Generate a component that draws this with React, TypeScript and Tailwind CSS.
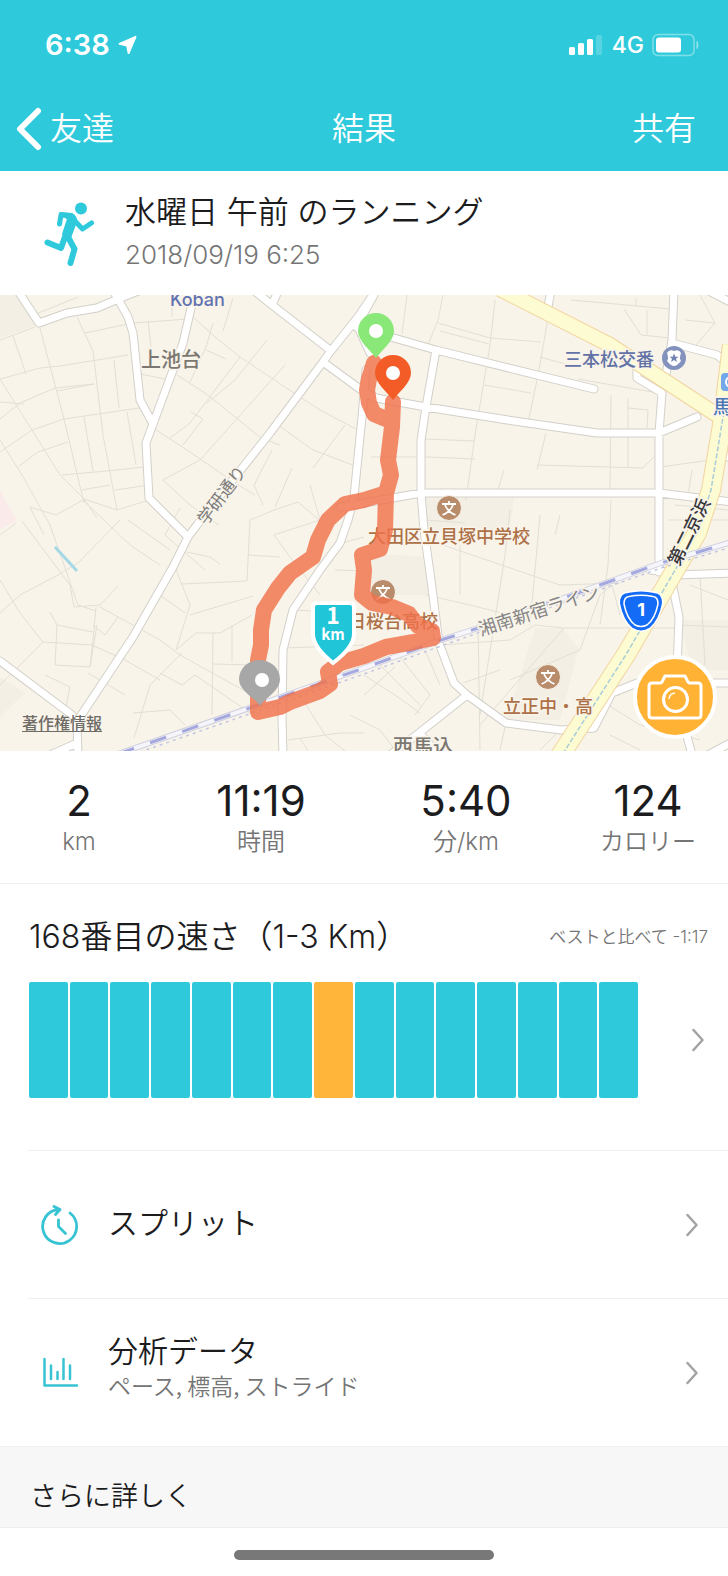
import { ReactNode } from 'react';

const jp = "font-[Inter,'Noto_Sans_CJK_JP',sans-serif]";

const stats = [
  { value: '2', label: 'km' },
  { value: '11:19', label: '時間' },
  { value: '5:40', label: '分/km' },
  { value: '124', label: 'カロリー' },
];

const bars = Array.from({ length: 15 }, (_, index) => index === 7);

// Small streets, drawn as hairlines
const streets = [
  'M36 19 L78 2 M0 45 L35 32 M40 33 L64 124 L84 208 M0 84 L40 73 L60 71 L128 60 M0 107 L24 109 M0 124 L20 108 L55 93 L94 89',
  'M13 41 L26 79 M77 22 L93 56 L103 140 L117 215 M85 38 L133 28 L188 24 M148 26 L151 52 M0 84 L60 180 L84 204 L97 223',
  'M64 124 L139 113 M114 65 L119 113 M84 122 L93 176 M127 117 L136 170 M57 96 L94 89 M140 79 L165 84 M19 171 L38 157 L68 147',
  'M0 157 L32 135 L64 124 M0 145 L22 180 L50 230 L78 310 L96 316 M62 180 L117 175 L152 171 M82 195 L110 190 M115 195 L149 190',
  'M84 204 L117 215 L146 206 M83 205 L56 220 L30 212 M83 205 L130 250 L160 270 M30 212 L44 240 M16 228 L0 240',
  'M193 22 L215 42 L240 62 L297 100 L320 115 L358 135 M177 80 L208 100 L261 143 L280 150 M153 133 L190 157 L235 188 L255 200',
  'M267 45 L235 85 L207 108 M240 62 L190 128 L170 143 M285 70 L200 165 L163 185 L190 210 L219 230 M213 28 L206 52 L190 87',
  'M206 55 L226 64 M233 3 L223 36 M172 2 L172 22 M191 117 L203 124 L183 150 M278 130 L313 155 L358 172 M345 130 L313 173',
  'M272 155 L254 190 L263 210 M292 173 L275 212 M310 190 L320 225 M250 225 L274 215 L298 207 L325 230 M180 213 L165 240 L205 275',
  'M128 225 L170 255 M22 226 L70 290 L74 312 L100 310 L118 291 M0 318 L20 300 L58 280 L78 268 L120 225 M0 285 L20 318 L43 347 L92 350',
  'M43 347 L0 390 M50 317 L57 330 L55 370 L90 372 L93 345 L96 312 M57 330 L93 337 M100 312 L160 345 L180 360 L270 410',
  'M92 350 L125 365 L160 385 M88 378 L125 400 M90 372 L97 330 M45 380 L70 392 L66 412 M118 322 L105 340 L93 330',
  'M175 272 L190 310 L176 355 M182 289 L247 286 L250 225 M190 320 L253 301 M160 300 L185 318 M176 355 L196 338 L220 338 L252 320 M213 338 L212 420',
  'M232 330 L232 367 M213 369 L255 370 M160 378 L182 390 L195 380 L250 418 M182 358 L150 390 L134 443 M133 418 L170 415 L185 430',
  'M187 257 L210 262 L220 269 M248 260 L280 262 M274 240 L290 262 L320 300 M274 240 L320 225 M335 250 L364 242 M335 275 L364 276',
  'M285 353 L364 350 M290 315 L364 318 M303 405 L325 440 L345 456 M288 445 L340 438 L364 438 M300 443 L308 456',
  'M407 0 L402 39 M443 0 L438 25 L426 55 M495 5 L490 50 L475 140 M438 28 L490 43 L541 47 M440 36 L489 49 M549 18 L538 80 L527 133',
  'M484 90 L531 98 M475 140 L466 205 M540 62 L580 73 M578 84 L658 98 M611 100 L610 198 M628 103 L628 172 M628 113 L648 115 L647 133',
  'M537 175 L546 138 M504 175 L497 198 M426 162 L475 164 M424 144 L475 146 M371 162 L426 162 M537 170 L643 173 L658 158',
  'M571 5 L605 8 L670 14 M624 14 L641 40 L670 43 M636 3 L636 12 M647 15 L647 40 M700 0 L715 28 L696 50 M685 25 L715 28 M660 172 L711 165 M692 175 L688 200',
  'M426 300 L470 310 L530 325 M510 215 L505 260 L480 420 M540 220 L530 330 M611 205 L608 270 L600 330 M426 225 L465 228 M437 248 L560 290 L620 288',
  'M460 250 L460 300 M560 220 L555 240 M564 333 L678 333 M564 333 L480 430 M478 325 L480 455 M441 350 L510 345 L535 330 L564 333',
  'M364 380 L395 400 L420 418 M380 370 L420 410 M400 362 L430 400 L415 420 M425 355 L440 390 M364 400 L395 372 M463 388 L500 375',
  'M510 385 L580 355 L600 300 L612 290 L620 320 M690 290 L728 305 M680 330 L728 332 M700 280 L705 370 M600 405 L640 430 L700 445 M350 420 L380 435 L395 455',
  'M668 225 L728 225 M675 210 L728 215 M560 435 L540 455 M506 428 L500 455 M580 405 L620 400 M610 440 L640 455',
];

const roads = [
  'M18 -4 L39 28 L67 18 L97 13 L118 4 L138 -4',
  'M112 -6 L118 4 L128 22 L133 38 L140 105 L153 129',
  'M194 0 L183 48 L173 75 L153 129 L146 148 L149 203 L188 242',
  'M377 -6 L358 22 L330 57 L323 67 L270 138 L197 230 L188 242 L173 272 L133 342 L80 422 L77 430 L78 460',
  'M252 -6 L272 10 L330 55 M279 -6 L272 10',
  'M323 67 L364 97 L376 103 L426 112 L514 126 L597 138 L659 138 L697 122',
  'M358 32 L370 58 M374 0 L356 32 M366 75 L362 122 L354 202 L348 225 L340 248 L320 275 L293 315 L283 355 L282 425 L283 460',
  'M365 35 L394 43 L436 55 L594 94',
  'M436 55 L426 112 L421 145 L421 198 L424 235 L431 285 L439 348 L454 388 L467 400 L506 428 L561 435 L594 433 L612 398 L637 388 L732 388',
  'M467 400 L419 438 L390 460 M419 438 L440 460',
  'M340 212 L364 208 L421 198 L659 198 L732 207',
  'M674 -5 L672 45 L666 80 M637 72 L637 83 L662 98 L659 138 L659 277',
  'M672 48 L717 60 L732 72 M551 -5 L548 12 M705 -6 L732 8',
  'M674 280 L732 278 M672 288 L679 322 L677 375 M684 430 L692 460 M708 460 L732 447 M722 162 L732 162 M650 275 L668 277',
  'M0 366 L72 420 M50 460 L77 448',
];

const mainRoads = [
  { d: 'M500 -6 L610 50 L717 120', width: 14 },
  { d: 'M732 50 L722 130 L711 195 L697 238 L671 282 L627 358 L558 464', width: 18 },
];

const railway = 'M118 459 L364 373 L441 345 L500 326 L661 268 L732 247';

const Chevron = () => (
  <svg className="h-6 w-3 shrink-0" viewBox="0 0 12 24" fill="none" stroke="#a3a3a3" strokeWidth="2.500" strokeLinecap="round" strokeLinejoin="round">
    <path d="M1.500 2 L10.500 12 L1.500 22" />
  </svg>
);

const Pin = ({ x, y, color }: { x: number; y: number; color: string }) => (
  <g transform={`translate(${x} ${y})`}>
    <path d="M0 0 C-6 -8 -18 -17 -18 -27 A18 18 0 0 1 18 -27 C18 -17 6 -8 0 0 Z" fill={color} />
    <circle cx="0" cy="-27" r="7" fill="#fff" />
  </g>
);

const School = ({ x, y }: { x: number; y: number }) => (
  <g transform={`translate(${x} ${y})`}>
    <circle r="12.500" fill="#b98c6c" stroke="#f9f4ea" strokeWidth="1" />
    <path d="M-7 -4 H7 M0 -7 V-4 M-4 -3 Q-1 4 6.500 7 M4 -3 Q1 4 -6.500 7" stroke="#fff" strokeWidth="1.800" fill="none" />
  </g>
);

const StatusBar = () => (
  <div className="flex h-[86px] items-center justify-between pt-1 pr-7 pl-[45px]">
    <div className="flex items-center gap-2">
      <span className="text-[29px] leading-8 font-semibold">6:38</span>
      <svg className="h-5 w-5" viewBox="0 0 20 20" fill="#fff" stroke="#fff" strokeWidth="2" strokeLinejoin="round">
        <path d="M17.500 1.800 L1.500 8.800 L9.200 10.600 L10.600 18 Z" />
      </svg>
    </div>
    <div className="flex items-center gap-2">
      <svg className="h-6 w-9" viewBox="0 0 36 24" fill="#fff">
        <rect x="1" y="14" width="6" height="8" rx="1.500" />
        <rect x="10" y="10" width="6" height="12" rx="1.500" />
        <rect x="19" y="6" width="6" height="16" rx="1.500" />
        <rect x="28" y="2" width="6" height="20" rx="1.500" opacity=".2" />
      </svg>
      <span className="text-[23px] leading-8 font-medium">4G</span>
      <svg className="h-6 w-12" viewBox="0 0 48 24" fill="none">
        <rect x="1" y="1.500" width="41" height="21" rx="5" stroke="#fff" strokeOpacity=".4" strokeWidth="1.500" />
        <rect x="4" y="4.500" width="25" height="15" rx="3" fill="#fff" />
        <path d="M45 8.500 Q47 12 45 15.500 Z" fill="#fff" stroke="#fff" opacity=".5" />
      </svg>
    </div>
  </div>
);

const RouteMap = () => (
  <section className="relative overflow-hidden">
    <svg className={`block h-auto w-full ${jp}`} viewBox="0 0 728 456" role="img" aria-label="ルート">
      <rect width="728" height="456" fill="#f9f4ea" />
      <path d="M0 0 H20 L37 30 L0 43 Z M0 382 L25 398 L0 422 Z M424 203 L514 203 L508 250 L428 235 Z M368 258 L427 262 L431 300 L370 300 Z M535 333 L562 333 L579 353 L560 425 L506 425 Z M680 325 H728 V375 H692 Z" fill="#f4efe4" />
      <path d="M0 195 L16 225 L0 235 Z" fill="#fbeaea" />
      <path d={streets.join(' ')} stroke="#e3dfd6" strokeWidth="1" fill="none" />
      <path d="M55 252 L77 276" stroke="#a5d8e6" strokeWidth="3" />

      <path d={roads.join(' ')} stroke="#d3d0ca" strokeWidth="9" fill="none" strokeLinejoin="round" strokeLinecap="round" />
      <path d={roads.join(' ')} stroke="#fff" strokeWidth="7" fill="none" strokeLinejoin="round" strokeLinecap="round" />
      {mainRoads.map((road) => (
        <path key={road.d} d={road.d} stroke="#f2d5a0" strokeWidth={road.width + 2} fill="none" strokeLinejoin="round" />
      ))}
      {mainRoads.map((road) => (
        <path key={road.d} d={road.d} stroke="#fdfbd2" strokeWidth={road.width} fill="none" strokeLinejoin="round" />
      ))}
      <path d="M725 110 L711 195 L697 238 L671 282 L627 358 L562 460" stroke="#a9cdd8" strokeWidth="1.500" strokeDasharray="5 2" fill="none" />

      <path d={railway} stroke="#cfd0de" strokeWidth="6" fill="none" />
      <path d={railway} stroke="#f5f5fb" strokeWidth="4" fill="none" />
      <path d={railway} stroke="#a4a8dc" strokeWidth="3" strokeDasharray="17 17" fill="none" />
      <path d="M120 464 L364 379 L441 351 L661 273 L732 252" stroke="#c3c6e2" strokeWidth="1.500" strokeDasharray="3 4" fill="none" />

      <g fill="#ad7047" stroke="#f9f4ea" strokeWidth="3" paintOrder="stroke" fontSize="18" fontWeight="500">
        <text x="368" y="248">大田区立貝塚中学校</text>
        <text x="348" y="333">日桜台高校</text>
        <text x="503" y="418">立正中・高</text>
      </g>
      <School x={449} y={213} />
      <School x={383} y={297} />
      <School x={548} y={382} />

      <g stroke="#f9f4ea" strokeWidth="3" paintOrder="stroke">
        <text x="170" y="11" fontSize="18" fontWeight="500" fill="#6272b0">Koban</text>
        <text x="141" y="72" fontSize="20" fontWeight="500" fill="#7b7771">上池台</text>
        <text x="564" y="71" fontSize="18" fontWeight="500" fill="#6272a6">三本松交番</text>
        <text x="713" y="119" fontSize="19" fontWeight="500" fill="#4d76b5">馬</text>
        <text x="393" y="459" fontSize="20" fontWeight="500" fill="#7b7771">西馬込</text>
        <text transform="translate(206 231) rotate(-53)" fontSize="17" fontWeight="400" fill="#7b7b7b">学研通り</text>
        <text transform="translate(481 341) rotate(-18)" fontSize="18" fontWeight="400" fill="#858585">湘南新宿ライン</text>
        <text transform="translate(679 272) rotate(-64)" fontSize="18" fontWeight="500" fill="#38383c">第二京浜</text>
      </g>
      <g transform="translate(674 63)">
        <circle r="12" fill="#8391bd" />
        <path d="M-7 -5 Q-5 -9 0 -7 Q5 -9 7 -5 Q5 0 7 3 Q3 8 0 8 Q-3 8 -7 3 Q-5 0 -7 -5 Z" fill="#fff" />
        <path d="M0 -4.500 L1.300 -1.300 L4.500 -1.200 L2 .8 L3 4 L0 2 L-3 4 L-2 .8 L-4.500 -1.200 L-1.300 -1.300 Z" fill="#7282b2" />
      </g>
      <rect x="721" y="78" width="20" height="18" rx="4" fill="#73a8eb" />
      <circle cx="731" cy="87" r="5" fill="none" stroke="#fff" strokeWidth="2" />

      <path
        d="M374 68 L369 84 L367 95 L369 108 L374 119 L386 124 L392 122 M393 107 L392 132 L388 165 L391 180 L386 198 L385 235 L380 254 L362 260 L364 275 L362 300 L372 308 L392 312 L409 319 L418 331 L432 336 L433 343 L414 347 L386 352 L364 361 L340 368 L328 377 L330 389 L320 396 L290 407 L280 412 L258 417 L258 365 L261 350 L261 335 L264 315 L278 293 L290 278 L313 262 L318 245 L328 225 L345 209 L364 205 L386 198"
        stroke="#f0724b"
        strokeOpacity=".82"
        strokeWidth="16"
        fill="none"
        strokeLinejoin="round"
        strokeLinecap="round"
      />

      <Pin x={376} y={63} color="#8ae878" />
      <Pin x={393} y={105} color="#f45c27" />
      <g>
        <path d="M260 411 C254 402 239 396 239 384 A20.500 19 0 0 1 280 384 C280 396 266 402 260 411 Z" fill="#a7a7a7" />
        <circle cx="262" cy="385" r="7" fill="#fff" />
      </g>

      <path d="M317 308 H350 Q354 308 354 312 V339 Q354 352 333 368 Q313 352 313 339 V312 Q313 308 317 308 Z" fill="#20c5d8" stroke="#fff" strokeWidth="4" />
      <g fill="#fff" fontWeight="700" textAnchor="middle" fontFamily="'Noto Sans CJK JP', sans-serif">
        <text x="333" y="329" fontSize="23">1</text>
        <text x="333" y="345" fontSize="15">km</text>
      </g>

      <g transform="translate(641 316)">
        <path d="M-13 -17 Q0 -20 13 -17 Q20 -17 20 -8 Q17 8 8 16 Q0 21 -8 16 Q-17 8 -20 -8 Q-20 -17 -13 -17 Z" fill="#146bf5" stroke="#fff" strokeWidth="5" />
        <path d="M-13 -17 Q0 -20 13 -17 Q20 -17 20 -8 Q17 8 8 16 Q0 21 -8 16 Q-17 8 -20 -8 Q-20 -17 -13 -17 Z" fill="#146bf5" stroke="#146bf5" strokeWidth="2" />
        <path d="M-12 -14.500 Q0 -17 12 -14.500 Q17 -14 17 -7 Q14 8 6 14 Q0 17 -6 14 Q-14 8 -17 -7 Q-17 -14 -12 -14.500 Z" fill="none" stroke="#fff" strokeWidth="1.500" />
        <text x="0" y="5" fontSize="18" fontWeight="700" fill="#fff" textAnchor="middle">1</text>
      </g>
    </svg>

    <a href="#copyright" className="absolute bottom-4 left-[22px] text-base leading-6 font-medium text-[#6f6b66] underline underline-offset-2">
      著作権情報
    </a>
    <button type="button" aria-label="写真を追加" className="absolute right-[11px] bottom-3 flex h-[84px] w-[84px] items-center justify-center rounded-full border-4 border-white bg-[#ffb234] text-white">
      <svg className="h-12 w-14" viewBox="0 0 56 48" fill="none" stroke="#fff" strokeWidth="3" strokeLinejoin="round">
        <path d="M5 10 H13 Q15 10 16 7 L18 3 H38 L40 7 Q41 10 43 10 H51 Q54 10 54 13 V42 Q54 45 51 45 H5 Q2 45 2 42 V13 Q2 10 5 10 Z" />
        <circle cx="28.500" cy="26.500" r="12" />
        <path d="M22 26 Q22.500 20.500 28 20" strokeWidth="1.500" />
      </svg>
    </button>
  </section>
);

const DetailRow = ({ icon, title, subtitle }: { icon: ReactNode; title: string; subtitle?: string }) => (
  <li className="ml-7 border-t border-[#efefef]">
    <button type="button" className="flex h-[147px] w-full items-center pr-[30px] pl-3 text-left">
      {icon}
      <span className={`ml-7 flex flex-1 flex-col ${subtitle ? 'pb-3' : 'pb-1'}`}>
        <span className="text-[30px] leading-9">{title}</span>
        {subtitle && <span className="font-['Noto_Sans_CJK_JP',sans-serif] text-[23px] leading-8 text-[#757575]">{subtitle}</span>}
      </span>
      <Chevron />
    </button>
  </li>
);

export default function App() {
  return (
    <div className={`min-h-screen bg-white font-[350] text-[#1c1c1e] ${jp}`}>
      <header className="bg-[#2ecadb] text-white">
        <StatusBar />
        <nav className="grid h-[85px] grid-cols-3 items-center pr-8 pl-4 text-[32px] leading-10">
          <button type="button" className="flex items-center gap-2 justify-self-start">
            <svg className="h-11 w-[26px]" viewBox="0 0 26 44" fill="none" stroke="#fff" strokeWidth="6" strokeLinecap="round" strokeLinejoin="round">
              <path d="M22 4 L4 22 L22 40" />
            </svg>
            友達
          </button>
          <h1 className="ml-4 text-center">結果</h1>
          <button type="button" className="justify-self-end">共有</button>
        </nav>
      </header>

      <section className="flex h-[124px] items-center pl-[43px]">
        <svg className="h-[66px] w-[52px]" viewBox="0 0 52 66" fill="none" stroke="#2ecadb" strokeLinecap="round" strokeLinejoin="round">
          <circle cx="38" cy="8.500" r="6" fill="#2ecadb" stroke="none" />
          <path d="M17 13 L29 14 Q34 17 33 22 L27 38 L20 34 L25 19 Z" fill="#2ecadb" strokeWidth="2" />
          <path d="M27 15.500 L18 15 L16.500 24 M31 20 L39.500 29 L48.500 23" strokeWidth="5" />
          <path d="M23 34 L18 48 L4.500 42.500 M24.500 36 L31.500 49 L27.500 63" strokeWidth="6" />
        </svg>
        <div className="ml-[30px]">
          <h2 className="text-[31px] leading-[44px]">水曜日 午前 のランニング</h2>
          <p className="text-[26px] leading-[42px] text-[#757575]">2018/09/19 6:25</p>
        </div>
      </section>

      <RouteMap />

      <dl className="grid h-[133px] grid-cols-[158fr_206fr_204fr_160fr] content-center border-b border-[#efefef] text-center">
        {stats.map((stat) => (
          <div key={stat.label} className="flex flex-col-reverse">
            <dt className="text-2xl leading-8 text-[#757575]">{stat.label}</dt>
            <dd className="text-[42px] leading-[50px] font-normal">{stat.value}</dd>
          </div>
        ))}
      </dl>

      <section className="h-[266px] pt-7 pl-[29px]">
        <div className="flex items-center justify-between pr-5">
          <h2 className="text-[32px] leading-[50px]">168番目の速さ（1-3 Km）</h2>
          <p className="text-[17px] leading-6 text-[#757575]">ベストと比べて -1:17</p>
        </div>
        <button type="button" aria-label="速さの比較" className="mt-5 flex w-full items-center justify-between pr-6">
          <span className="mr-[54px] flex h-[116px] flex-1 gap-0.5">
            {bars.map((current, index) => (
              <span key={index} className={`flex-1 rounded-xs ${current ? 'bg-[#ffb43a]' : 'bg-[#2ecadb]'}`} />
            ))}
          </span>
          <Chevron />
        </button>
      </section>

      <ul>
        <DetailRow
          title="スプリット"
          icon={
            <svg className="h-10 w-10" viewBox="0 0 40 40" fill="none" stroke="#37c3d3" strokeWidth="2.800" strokeLinecap="round" strokeLinejoin="round">
              <path d="M30 8 A17 17 0 1 1 19 4.500 M14 1.500 L20 4.500 L15.500 9.500 M18.500 15 V21.500 L25.500 28.500" />
            </svg>
          }
        />
        <DetailRow
          title="分析データ"
          subtitle="ペース, 標高, ストライド"
          icon={
            <svg className="h-10 w-10" viewBox="0 0 40 40" fill="none" stroke="#37c3d3" strokeWidth="2.500" strokeLinecap="round" strokeLinejoin="round">
              <path d="M4.500 6 V32.500 H37 M11 12.500 V26 M17.500 19 V26 M23.500 6 V26 M30 12.500 V26" />
            </svg>
          }
        />
      </ul>

      <footer>
        <h2 className="border-y border-[#efefef] bg-[#f7f7f7] pt-8 pb-3 pl-[30px] text-[27px] leading-9">さらに詳しく</h2>
        <div className="mx-auto mt-[22px] h-[10px] w-[260px] rounded-full bg-[#787878]" />
      </footer>
    </div>
  );
}
